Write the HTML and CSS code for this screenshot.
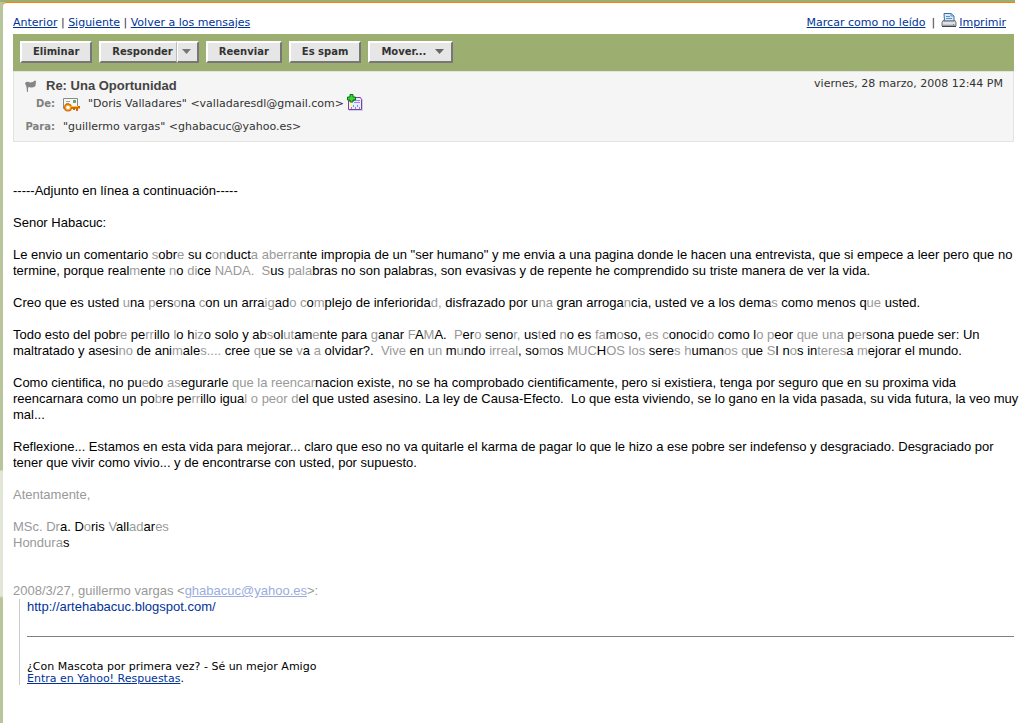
FILE: index.html
```html
<!DOCTYPE html>
<html lang="es">
<head>
    <meta charset="UTF-8">
    <meta name="viewport" content="width=device-width, initial-scale=1.0">
    <title>Re: Una Oportunidad</title>
    <link rel="stylesheet" href="styles.css">
</head>
<body>
    <div class="page">
        <main class="mail">
            <nav class="links">
                <div>
                    <a href="#">Anterior</a> | <a href="#">Siguiente</a> | <a href="#">Volver a los mensajes</a>
                </div>
                <div class="links-right">
                    <a href="#">Marcar como no leído</a>
                    <span>|</span>
                    <svg class="icon-print" width="16" height="16" viewBox="0 0 16 16">
                        <path d="M3.500 9 3 1.500h7l3 2.500v5z" fill="#d7ecfa" stroke="#3b6ea5"/>
                        <path d="M10 1.500V4h3M5 4.500h4M5 6.500h6" fill="none" stroke="#5b93c5"/>
                        <path d="M2.500 8 1 10.500V14h14v-3.500L13.500 8v1h-11z" fill="#c9ccd0" stroke="#70757c"/>
                        <path d="M2 11h12" stroke="#f7f7f7"/>
                        <path d="M1 14.500h14" stroke="#3f444a"/>
                        <path d="M12 12.500h1" stroke="#6a9a3d"/>
                    </svg>
                    <a href="#">Imprimir</a>
                </div>
            </nav>

            <div class="toolbar">
                <button class="button">Eliminar</button>
                <div class="split">
                    <button class="button">Responder</button>
                    <button class="button arrow" aria-label="Opciones de respuesta"><svg width="9" height="5" viewBox="0 0 9 5"><path d="M0 0h9L4.500 5z" fill="#777"/></svg></button>
                </div>
                <button class="button">Reenviar</button>
                <button class="button">Es spam</button>
                <button class="button menu">Mover... <svg width="9" height="5" viewBox="0 0 9 5"><path d="M0 0h9L4.500 5z" fill="#666"/></svg></button>
            </div>

            <header class="header">
                <div class="subject">
                    <svg width="12" height="13" viewBox="0 0 12 13">
                        <path d="M0 3Q2 1 5 2.500 8 2.500 10 .5L11 1l-.5 5Q8 8 5.500 7.500 4 6.500 3 8v4H2L1.500 7z" fill="#858585"/>
                    </svg>
                    <h1>Re: Una Oportunidad</h1>
                    <span class="date">viernes, 28 marzo, 2008 12:44 PM</span>
                </div>
                <div class="from">
                    <b>De:</b>
                    <svg width="17" height="15" viewBox="0 0 17 15">
                        <path d="M.5 1.500h14v10H.5z" fill="#f5f7f2" stroke="#8a8a8a"/>
                        <path d="M10 3h3v3h-3z" fill="#6fa56d"/>
                        <path d="M3 4.500h4M3 6.500h3" stroke="#9aa79a"/>
                        <circle cx="5" cy="10.500" r="3" fill="#fff" stroke="#d96500" stroke-width="2"/>
                        <circle cx="5" cy="10.500" r="2.500" fill="none" stroke="#ffb52e"/>
                        <path d="M8 10h8v1.500M11 10v3M14 10v4" fill="none" stroke="#d96500" stroke-width="2"/>
                        <path d="M8 9.500h7" stroke="#ffc52e"/>
                    </svg>
                    <span class="address">"Doris Valladares" &lt;valladaresdl@gmail.com&gt;</span>
                    <svg width="16" height="17" viewBox="0 0 16 17">
                        <path d="M2 16.500h13.500V5" fill="none" stroke="#d0d0d8"/>
                        <path d="M1.500 6.500h6l1-3h5l1 2v10h-13z" fill="#d9f6ff" stroke="#8b35b5"/>
                        <path d="M2 8h3v5H2z" fill="#fff6a8"/>
                        <path d="M8 6.500h5M7 8.500h6" stroke="#c573ee"/>
                        <path d="M4.500 15v-2M6.500 13v-2M8.500 15v-2M10.500 13v-2M12.500 15v-2" stroke="#a37acb"/>
                        <path d="M3 .5h3V3h2.500v3H6v2H3V6H.5V3H3z" fill="#3fd13b" stroke="#08750b"/>
                    </svg>
                </div>
                <div class="to">
                    <b>Para:</b>
                    <span>"guillermo vargas" &lt;ghabacuc@yahoo.es&gt;</span>
                </div>
            </header>

            <article class="body">
                <p>-----Adjunto en línea a continuación-----</p>
                <p>Senor Habacuc:</p>
                <p>Le envio un comentario <span class="faded">s</span>obr<span class="faded">e</span> su c<span class="faded">on</span>duct<span class="faded">a</span> <span class="faded">aberra</span>nte impropia de un "ser humano" y me envia a una pagina donde le hacen una entrevista, que si empece a leer pero que no<br>
                termine, porque real<span class="faded">m</span>ente <span class="faded">n</span>o <span class="faded">di</span>ce <span class="faded">NADA.&nbsp; S</span>us <span class="faded">pala</span>bras no son palabras, son evasivas y de repente he comprendido su triste manera de ver la vida.</p>
                <p>Creo que es usted <span class="faded">u</span>na <span class="faded">p</span>ers<span class="faded">o</span>na <span class="faded">c</span>on un arra<span class="faded">ig</span>ad<span class="faded">o</span> <span class="faded">c</span>o<span class="faded">m</span>plejo de inferiorida<span class="faded">d,</span> disfrazado por u<span class="faded">na</span> gran arroga<span class="faded">n</span>cia, usted ve a los dema<span class="faded">s</span> como menos q<span class="faded">ue</span> usted.</p>
                <p>Todo esto del pobr<span class="faded">e</span> pe<span class="faded">rr</span>illo <span class="faded">l</span>o h<span class="faded">iz</span>o solo y ab<span class="faded">s</span>ol<span class="faded">ut</span>am<span class="faded">e</span>nte para <span class="faded">g</span>anar <span class="faded">F</span>A<span class="faded">M</span>A.&nbsp; <span class="faded">P</span>er<span class="faded">o</span> seno<span class="faded">r,</span> us<span class="faded">t</span>ed <span class="faded">n</span>o es <span class="faded">fa</span>m<span class="faded">o</span>so, <span class="faded">es c</span>onoc<span class="faded">i</span>d<span class="faded">o</span> como l<span class="faded">o</span> <span class="faded">p</span>eor <span class="faded">que una</span> p<span class="faded">er</span>sona puede ser: Un<br>
                maltratado y asesi<span class="faded">no</span> de ani<span class="faded">m</span>ale<span class="faded">s....</span> cree <span class="faded">q</span>ue se <span class="faded">v</span>a <span class="faded">a</span> olvidar?.&nbsp; <span class="faded">Vive</span> en <span class="faded">un</span> m<span class="faded">u</span>ndo <span class="faded">irreal</span>, so<span class="faded">m</span>os <span class="faded">MUC</span>H<span class="faded">OS los</span> sere<span class="faded">s h</span>uman<span class="faded">os q</span>ue <span class="faded">S</span>I n<span class="faded">o</span>s in<span class="faded">teres</span>a <span class="faded">m</span>ejorar el mundo.</p>
                <p>Como cientifica, no pu<span class="faded">e</span>do <span class="faded">as</span>egurarle <span class="faded">que la reencar</span>nacion existe, no se ha comprobado cientificamente, pero si existiera, tenga por seguro que en su proxima vida<br>
                reencarnara como un po<span class="faded">b</span>re pe<span class="faded">rr</span>illo igua<span class="faded">l o peor d</span>el que usted asesino. La ley de Causa-Efecto.&nbsp; Lo que esta viviendo, se lo gano en la vida pasada, su vida futura, la veo muy<br>
                mal...</p>
                <p>Reflexione... Estamos en esta vida para mejorar... claro que eso no va quitarle el karma de pagar lo que le hizo a ese pobre ser indefenso y desgraciado. Desgraciado por<br>
                tener que vivir como vivio... y de encontrarse con usted, por supuesto.</p>
                <p class="faded">Atentamente,</p>
                <p class="signature"><span class="faded">MSc. Dr</span>a. D<span class="faded">o</span>ris <span class="faded">V</span>all<span class="faded">ad</span>ar<span class="faded">es</span><br>
                <span class="faded">Hondura</span>s</p>
                <div class="faded">2008/3/27, guillermo vargas &lt;<a href="#">ghabacuc@yahoo.es</a>&gt;:</div>
                <blockquote class="quote">
                    <a class="blog" href="#">http://artehabacuc.blogspot.com/</a>
                    <hr>
                    <div class="promo">
                        ¿Con Mascota por primera vez? - Sé un mejor Amigo<br>
                        <a href="#">Entra en Yahoo! Respuestas</a>.
                    </div>
                </blockquote>
            </article>
        </main>
    </div>
</body>
</html>
```

FILE: styles.css
```css
* {
    box-sizing: border-box;
}
body {
    margin: 0;
    background: #fff;
    color: #333;
    font-family: Verdana, "DejaVu Sans", sans-serif;
    font-size: 11px;
    line-height: 12px;
}
a {
    color: #003399;
}
.page {
    min-height: 100vh;
    margin-right: 8px;
    padding-left: 3px;
    border-top: 2px solid #9caf70;
    background: linear-gradient(#b8c49a 468px, #e1e6d6 469px, #e1e6d6 594px, #b8c49a 596px);
}
.mail {
    min-height: calc(100vh - 2px);
    padding: 0 1px 0 10px;
    border-top: 1px solid #ff8000;
    border-top-left-radius: 4px;
    background: #fff;
}
.links {
    display: flex;
    justify-content: space-between;
    align-items: center;
    height: 31px;
    padding: 8px 8px 0 0;
}
.links-right {
    display: flex;
    align-items: center;
    gap: 6px;
}
.icon-print {
    margin: -6px -4px 0 0;
}
.toolbar {
    display: flex;
    gap: 7px;
    height: 37px;
    padding: 7px;
    background: #9caf70;
}
.button {
    height: 22px;
    padding: 0 11px;
    border: 2px solid;
    border-color: #fff #777 #777 #fff;
    background: #e6e6e6;
    color: #333;
    font-family: inherit;
    font-size: 10px;
    font-weight: bold;
    line-height: 18px;
    white-space: nowrap;
}
.button svg {
    vertical-align: 1px;
}
.split {
    display: flex;
}
.split .button:first-child {
    padding-right: 3px;
    border-right: 1px solid #bbb;
}
.split .arrow {
    padding: 0 6px 0 4px;
    border-left: 1px solid #fff;
}
.menu {
    padding-right: 7px;
}
.menu svg {
    margin-left: 5px;
}
.header {
    height: 71px;
    padding: 5px 10px 0 11px;
    border: 1px solid #e3e3e3;
    background: #f5f5f5;
}
.subject {
    display: flex;
    align-items: center;
    height: 18px;
}
.subject h1 {
    flex: 1;
    margin: 0 0 0 9px;
    font: bold 13px/16px "Liberation Sans", Arial, sans-serif;
    color: #444;
}
.date {
    margin-top: -4px;
}
.from,
.to {
    display: grid;
    grid-template-columns: 30px auto auto 1fr;
    align-items: center;
    column-gap: 8px;
    height: 18px;
}
.from b,
.to b {
    color: #808080;
    font-size: 10px;
    text-align: right;
}
.to {
    height: 28px;
}
.address + svg {
    margin: -3px 0 0 -5px;
}
.body {
    padding-top: 41px;
    color: #000;
    font: 13px/16px "Liberation Sans", Arial, sans-serif;
}
/* long lines may run a little past the column */
.body p {
    margin: 0 -8px 16px 0;
}
.body .signature {
    margin-bottom: 32px;
}
.faded {
    color: #999;
}
.faded a {
    color: #99ade0;
}
.quote {
    margin: 0 0 0 6px;
    padding-left: 7px;
    border-left: 1px solid #ccc;
}
.blog {
    text-decoration: none;
}
.quote hr {
    height: 1px;
    margin: 21px 0 24px;
    border: 0;
    background: #808080;
}
.promo {
    font: 11px/12px Verdana, "DejaVu Sans", sans-serif;
}
```
